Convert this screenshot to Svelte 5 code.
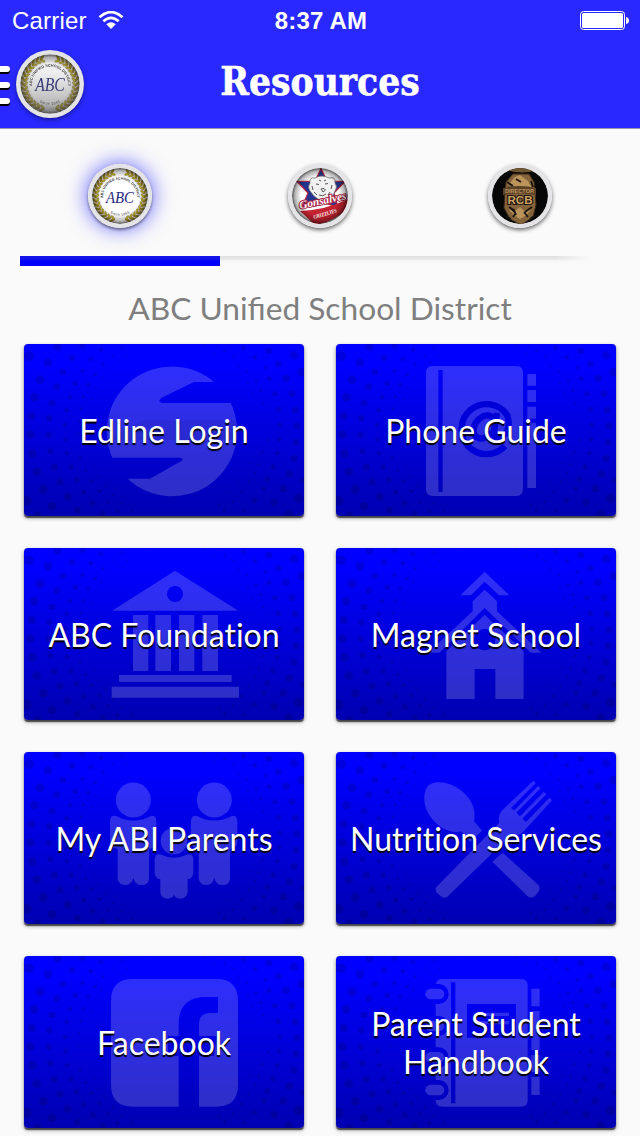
<script lang="ts">
	type Kind = 'abc' | 'bear' | 'badge';

	const schools: { kind: Kind; name: string }[] = [
		{ kind: 'abc', name: 'ABC Unified School District' },
		{ kind: 'bear', name: 'Gonsalves' },
		{ kind: 'badge', name: 'RCB' }
	];

	const links = [
		{ icon: 'edline', label: 'Edline Login' },
		{ icon: 'phone', label: 'Phone Guide' },
		{ icon: 'bank', label: 'ABC Foundation' },
		{ icon: 'school', label: 'Magnet School' },
		{ icon: 'family', label: 'My ABI Parents' },
		{ icon: 'food', label: 'Nutrition Services' },
		{ icon: 'facebook', label: 'Facebook' },
		{ icon: 'handbook', label: 'Parent Student Handbook' }
	];

	let active = $state(0);

	// x, y, radius on the 840x516 card grid
	const dots = [
		[15, 37, 15], [48, 107, 13], [31, 160, 13], [23, 216, 12], [19, 272, 13], [25, 328, 13], [38, 383, 13], [58, 436, 13], [84, 486, 13], [8, 470, 15], [40, 516, 12],
		[100, 9, 12], [72, 55, 13], [117, 84, 10], [98, 128, 10], [84, 177, 10], [76, 223, 9], [74, 272, 9], [79, 322, 9], [91, 370, 10], [108, 414, 10], [131, 459, 11], [160, 498, 10],
		[175, 6, 9], [144, 42, 10], [175, 82, 6], [154, 118, 8], [138, 159, 7], [128, 199, 7], [123, 243, 7], [125, 286, 7], [129, 328, 7], [141, 369, 8], [158, 407, 8], [179, 444, 8], [206, 477, 8], [236, 508, 8],
		[231, 17, 7], [200, 46, 7], [214, 91, 5], [193, 122, 6], [178, 158, 5], [171, 195, 5], [165, 233, 4], [163, 270, 4], [168, 343, 5], [185, 379, 5], [203, 412, 6], [226, 442, 6], [252, 474, 6], [280, 502, 6],
		[295, 13, 5], [265, 36, 4], [237, 62, 5], [233, 103, 3], [216, 131, 3], [203, 165, 3], [208, 368, 3], [224, 398, 3], [245, 427, 4], [268, 453, 4], [294, 478, 4], [325, 500, 4],
		[338, 20, 2], [308, 38, 3], [283, 53, 3], [256, 73, 2], [372, 5, 2],
		[810, 33, 13], [833, 84, 13], [786, 103, 11], [804, 149, 10], [814, 198, 10], [818, 246, 10], [816, 294, 10], [810, 343, 10], [796, 390, 11], [778, 435, 11], [750, 475, 11], [823, 463, 14], [794, 511, 13], [836, 410, 8],
		[734, 21, 10], [763, 60, 10], [735, 104, 7], [753, 149, 8], [763, 196, 8], [767, 243, 7], [765, 286, 7], [760, 328, 7], [747, 368, 8], [730, 405, 8], [720, 435, 7], [691, 469, 8], [661, 500, 6],
		[658, 11, 7], [693, 40, 7], [725, 71, 6], [697, 111, 5], [710, 140, 5], [717, 178, 4], [734, 288, 4], [717, 325, 4], [704, 361, 4], [692, 387, 4], [675, 413, 4], [653, 443, 5], [628, 473, 5], [602, 498, 5],
		[602, 22, 4], [631, 40, 4], [642, 65, 4], [668, 82, 4], [671, 117, 3], [687, 151, 3], [706, 331, 3], [680, 357, 3], [640, 415, 3], [615, 445, 3], [585, 482, 4], [580, 7, 3], [571, 25, 3], [538, 3, 3]
	];

	// laurel leaves, mirrored on both sides of the seal
	const leaves = Array.from({ length: 15 }, (_, i) => {
		const deg = 108 + i * 10.3;
		const a = (deg * Math.PI) / 180;
		return { x: Math.cos(a), y: Math.sin(a), deg };
	});
</script>

{#snippet emblem(kind: Kind, dim: boolean)}
	<svg class="emblem" viewBox="0 0 64 64">
		<defs>
			<radialGradient id="inner-{kind}-{dim}">
				<stop offset="0.68" stop-color="#000" stop-opacity="0" />
				<stop offset="0.9" stop-color="#000" stop-opacity="0.3" />
				<stop offset="1" stop-color="#000" stop-opacity="0.7" />
			</radialGradient>
			<linearGradient id="shade" x1="0" y1="0" x2="0" y2="1">
				<stop offset="0.3" stop-color="#777" stop-opacity="0.12" />
				<stop offset="1" stop-color="#555" stop-opacity="0.55" />
			</linearGradient>
			<clipPath id="disc"><circle cx="32" cy="32" r="28" /></clipPath>
			<path id="arc-top" d="M17.500 41.500A17 17 0 1 1 46.500 41.500" />
			<path id="arc-bottom" d="M18 46A20 20 0 0 0 46 46" />
		</defs>
		<circle cx="32" cy="32" r="32" fill="#e4e4e6" />
		<g clip-path="url(#disc)">
			<circle cx="32" cy="32" r="28" fill={kind === 'badge' ? '#070707' : '#fff'} />
			{#if kind === 'abc'}
				{#each leaves as leaf}
					{#each [1, -1] as side}
						<g transform="translate(32 32) scale({side} 1)">
							<ellipse cx={leaf.x * 25.5} cy={leaf.y * 25.5} rx="3" ry="1.300" fill="#b59a24" transform="rotate({leaf.deg + 50} {leaf.x * 25.5} {leaf.y * 25.5})" />
							<ellipse cx={leaf.x * 22.8} cy={leaf.y * 22.8} rx="2.500" ry="1" fill="#d8c02c" stroke="#685d2d" stroke-width=".35" transform="rotate({leaf.deg + 125} {leaf.x * 22.8} {leaf.y * 22.8})" />
						</g>
					{/each}
				{/each}
				<text class="ring"><textPath href="#arc-top" startOffset="50%" text-anchor="middle">ABC UNIFIED SCHOOL DISTRICT</textPath></text>
				<text class="ring since"><textPath href="#arc-bottom" startOffset="50%" text-anchor="middle">Since 1965</textPath></text>
				<text class="abc" x="32" y="38.500" text-anchor="middle" textLength="28" lengthAdjust="spacingAndGlyphs">ABC</text>
			{:else if kind === 'bear'}
				<path d="M33 4.500L39 17L57 17.500L46 29L50 43L33 38L14 43L20 29L9 17.500L27 17Z" fill="#23368f" stroke="#b82242" stroke-width="1.200" />
				<path d="M22 19q-1-6 5-5q7-4 14 0q7-2 6 5q3 4 0 8l-2 5-5 1-4 4-6-2-4-3-4-5q-3-4 0-8Z" fill="#f1f1f1" stroke="#666" stroke-width=".7" />
				<path d="M28 20l3 .5M37 20l3-.5M33 25l3-.5 1.500 1.500-2.500 2ZM31 31q4 2 7-1M24 22l1 4M44 21l-1 4M26 28l3 3M42 28l-2 3M31 16l2 1M38 16l-2 1" fill="none" stroke="#444" stroke-width=".9" />
				<path d="M12 47Q38 46 60 35L58 46Q45 58 27 61Z" fill="#c52331" />
				<text class="gonzo" x="12" y="45" transform="rotate(-12 12 45)" textLength="48" lengthAdjust="spacingAndGlyphs">Gonsalves</text>
				<text class="grizz" x="26" y="55" transform="rotate(-16 26 55)" textLength="24" lengthAdjust="spacingAndGlyphs">GRIZZLIES</text>
			{:else}
				<path d="M18 6q6-1 9-1l1-5h9l2 5q6 0 10 1-15 5-31 0Z" fill="#6e5431" />
				<path d="M25 10h16l5 8 1 9 1 14-3 12-12 8-11-6-6-11 1-16 1-10Z" fill="#84633a" stroke="#3c2b1b" />
				<path d="M27 13l5-2 8 6 4 7-17-1-6-3ZM21 46l5 5 6 4 7-4 4-6-7 2-4-4-5 4Z" fill="#bb945c" />
				<path d="M19 18l6 4M43 17l2 6M21 43l5 3 2 5M44 43l-7 5M25 53l3-4M40 53l-4-5M28 15l5 3M18 52l5 3M46 52l-4 3" stroke="#1b1511" stroke-width="1.800" />
				<path d="M15 24q17-4 33 0v7q-16-3-33 0Z" fill="#594126" />
				<text class="rank" x="31.500" y="29" text-anchor="middle" textLength="29" lengthAdjust="spacingAndGlyphs">DIRECTOR</text>
				<text class="rcb" x="32" y="40" text-anchor="middle" textLength="25" lengthAdjust="spacingAndGlyphs">RCB</text>
			{/if}
			{#if kind !== 'badge'}
				<circle cx="32" cy="32" r="28" fill="url(#inner-{kind}-{dim})" />
			{/if}
			{#if dim}
				<circle cx="32" cy="32" r="28" fill="url(#shade)" />
			{/if}
		</g>
	</svg>
{/snippet}

{#snippet glyph(icon: string)}
	{#if icon === 'edline'}
		<path d="M570 114A195 195 0 0 0 265 341H468Q480 342 473 350L378 404H311A195 195 0 0 0 620 177H413Q399 171 413 161L510 114Z" />
		<path class="band" d="M250 288L358 229H636L638 288Z" />
	{:else if icon === 'phone'}
		<path fill-rule="evenodd" d="M290 66H541Q561 66 561 86V436Q561 456 541 456H290Q270 456 270 436V86Q270 66 290 66ZM307 78V444H320V78Z" />
		<path d="M574 90h26v35h-26ZM574 138h26v36h-26ZM574 188h26v36h-26ZM574 236h26v196h-26Z" />
		<path class="cut" d="M507 306A75 75 0 1 1 514 214Q527 256 499 278Q473 288 474 263L483 207M477 234Q468 208 443 216Q407 235 414 269Q431 300 469 265" />
	{:else if icon === 'bank'}
		<path fill-rule="evenodd" d="M453 68L643 188H264ZM453 114a24 24 0 1 0 .1 0Z" />
		<path d="M327 201h46v168h-46ZM394 201h47v168h-47ZM465 201h46v168h-46ZM535 201h47v168h-47ZM285 381h338v21H285ZM263 416h382v33H263Z" />
	{:else if icon === 'school'}
		<path d="M446 71L520 142H489L446 101L405 142H373ZM446 125L483 160V190L616 314H585L446 180L310 314H276L410 190V160Z" />
		<path fill-rule="evenodd" d="M446 200L563 310V453H478V363H416V453H331V310ZM446 243a32 32 0 1 0 .1 0Z" />
	{:else if icon === 'family'}
		{#each [0, 243] as dx}
			<g transform="translate({dx} 0)">
				<circle cx="328" cy="144" r="52.500" />
				<path d="M258 208Q259 189 276 192Q328 219 381 192Q396 189 397 208V270Q397 289 375 290V380Q373 399 354 399Q332 399 328 377Q323 399 302 399Q284 398 281 380V290Q258 288 258 270Z" />
			</g>
		{/each}
		<circle cx="450" cy="267" r="40" />
		<path d="M392 320Q395 303 412 308Q450 326 488 308Q506 303 508 320V362Q506 380 491 382V420Q488 440 468 440Q453 440 450 427Q447 440 430 440Q410 438 409 420V382Q393 380 392 362Z" />
	{:else if icon === 'food'}
		<path d="M272 107C289 78 354 89 390 129C413 154 420 184 414 207L438 236L402 270L376 238C348 246 312 231 286 198C263 168 259 132 272 107Z" />
		<path d="M500 302L605 397Q614 406 609 416L597 433Q585 441 574 432L469 329Z" />
		<path d="M592 86L497 176Q485 189 490 212L299 407Q297 414 302 422L319 436Q327 439 334 434L525 249Q552 252 562 239L648 145L640 137L570 210L559 200L631 127L623 120L552 193L541 182L614 109L606 102L535 175L525 168L599 94Z" />
	{:else if icon === 'facebook'}
		<path fill-rule="evenodd" d="M326 69H577Q642 69 642 134V387Q642 452 577 452H525V300H570L578 240H525V205Q525 171 560 171H582V123H545Q464 123 464 205V240H432V300H464V452H326Q261 452 261 387V134Q261 69 326 69Z" />
	{:else}
		<path fill-rule="evenodd" d="M319 69H555Q575 69 575 89V432Q575 452 555 452H319Q299 452 299 432H308A30 30 0 0 0 308 372H299V334H308A30 30 0 0 0 308 274H299V240H308A30 30 0 0 0 308 180H299V144H308A30 30 0 0 0 308 84H299Q303 69 319 69ZM345 79V442H358V79ZM393 144V245H540V144Z" />
		{#each [114, 210, 304, 402] as y}
			<rect x="268" y={y - 16} width="57" height="32" rx="16" />
		{/each}
		<path d="M415 170h104v10H415ZM415 195h104v10H415ZM586 98h25v53h-25ZM586 165h25v117h-25ZM586 297h25v52h-25ZM586 363h25v54h-25Z" />
	{/if}
{/snippet}

<div class="app">
	<header>
		<div class="status">
			<span class="carrier">
				Carrier
				<svg width="26" height="19" viewBox="0 0 26 19">
					<path d="M1.500 6.300Q13-4 24.500 6.300M5.300 10.300Q13 3.500 20.700 10.300" fill="none" stroke="#fff" stroke-width="2.800" />
					<path d="M8.300 13.200Q13 9.500 17.700 13.200L13 18Z" fill="#fff" />
				</svg>
			</span>
			<strong>8:37 AM</strong>
			<svg class="battery" width="50" height="20" viewBox="0 0 50 20">
				<rect x=".5" y=".5" width="44" height="18" rx="3" fill="none" stroke="#fff" />
				<rect x="2" y="2" width="41" height="15" rx="1.500" fill="#fff" />
				<path d="M46 6q3 .5 3 3.500t-3 3.500Z" fill="#fff" />
			</svg>
		</div>
		<div class="nav">
			<button class="menu" aria-label="Menu">
				<span class="bars"><i></i><i></i><i></i></span>
				{@render emblem('abc', true)}
			</button>
			<h1>Resources</h1>
		</div>
	</header>

	<nav class="tabs">
		{#each schools as school, i}
			<button class:active={active === i} aria-label={school.name} onclick={() => (active = i)}>
				{@render emblem(school.kind, false)}
			</button>
		{/each}
	</nav>
	<div class="track"><div class="thumb" style="margin-left: {active * 200}px;"></div></div>

	<h2>ABC Unified School District</h2>

	<main>
		{#each links as link}
			<button class="card">
				<svg viewBox="0 0 840 516" aria-hidden="true">
					<g class="dots">
						{#each dots as [x, y, r]}
							<circle cx={x} cy={y} {r} />
						{/each}
					</g>
					<g class="glyph">{@render glyph(link.icon)}</g>
				</svg>
				<span>{link.label}</span>
			</button>
		{/each}
	</main>
</div>

<style>
	:global(body) {
		background: #fafafa;
		overflow: hidden;
	}

	.app {
		width: 640px;
		height: 1136px;
		overflow: hidden;
		font-family: Lato, sans-serif;
	}

	button {
		border: 0;
		padding: 0;
		background: none;
		font: inherit;
	}

	header {
		height: 129px;
		box-sizing: border-box;
		background: #2828ff;
		border-bottom: 1px solid #9a9aa6;
		color: #fff;
	}

	.status {
		display: grid;
		grid-template-columns: 1fr auto 1fr;
		align-items: center;
		height: 40px;
		box-sizing: border-box;
		padding: 1px 10px 0 12px;
		font: 24px 'Liberation Sans', sans-serif;
	}

	.status strong {
		letter-spacing: 0.2px;
	}

	.carrier {
		display: flex;
		align-items: center;
		gap: 11px;
		letter-spacing: 0.2px;
	}

	.battery {
		justify-self: end;
	}

	.nav {
		display: grid;
		grid-template-columns: 84px 1fr 84px;
		align-items: center;
		height: 88px;
	}

	.menu {
		display: flex;
		align-items: center;
		gap: 6px;
	}

	.menu .emblem {
		width: 68px;
		height: 68px;
		filter: drop-shadow(0 2px 2px rgba(0, 0, 0, 0.4));
	}

	.bars {
		display: grid;
		gap: 10px;
		padding-top: 2px;
	}

	.bars i {
		width: 10px;
		height: 6px;
		border-radius: 0 3px 3px 0;
		background: #fff;
		box-shadow: 0 2px #000;
	}

	h1 {
		margin: 0;
		padding-bottom: 5px;
		text-align: center;
		font: bold 38.5px 'DejaVu Serif', serif;
		font-stretch: condensed;
		-webkit-text-stroke: 0.5px #fff;
	}

	.emblem {
		display: block;
		flex: none;
	}

	.tabs {
		display: grid;
		grid-template-columns: repeat(3, 1fr);
		justify-items: center;
		padding: 35px 20px 28px;
	}

	.tabs button {
		width: 64px;
		height: 64px;
		border-radius: 50%;
		box-shadow: 0 2px 4px rgba(0, 0, 0, 0.6);
	}

	.tabs .active {
		box-shadow:
			0 2px 3px rgba(0, 0, 0, 0.45),
			0 0 22px rgba(0, 0, 255, 0.65);
	}

	.ring {
		font: bold 3.5px 'Liberation Sans', sans-serif;
		fill: #333;
	}

	.since {
		font-weight: normal;
		letter-spacing: 0.3px;
	}

	.abc {
		font: italic 17px 'Liberation Serif', serif;
		fill: #292b7d;
	}

	.gonzo {
		font: italic bold 11px 'Liberation Serif', serif;
		fill: #fff;
		stroke: #a3203f;
		stroke-width: 2px;
		paint-order: stroke;
	}

	.grizz {
		font: bold 5.5px 'Liberation Serif', serif;
		fill: #fff;
	}

	.rank {
		font: bold 5px 'Liberation Sans', sans-serif;
		fill: #bd965f;
	}

	.rcb {
		font: bold 10px 'Liberation Sans', sans-serif;
		fill: #d0a466;
		stroke: #1a120b;
		stroke-width: 2px;
		paint-order: stroke;
	}

	.track {
		height: 10px;
		margin: 0 50px 0 20px;
		background: linear-gradient(#e1e1e1, #e5e5e5 3px, #f7f7f7 5px, #fafafa);
		mask-image: linear-gradient(90deg, #000 94%, transparent);
	}

	.thumb {
		width: 200px;
		height: 10px;
		background: linear-gradient(#1515e6, #1111ea 3px, #0000fa 5px, #0000fa);
	}

	h2 {
		margin: 0;
		height: 78px;
		line-height: 84px;
		text-align: center;
		font-size: 31.7px;
		font-weight: 400;
		color: #7f7f7f;
	}

	main {
		display: grid;
		grid-template-columns: 280px 280px;
		grid-auto-rows: 172px;
		gap: 32px;
		padding: 0 24px;
	}

	.card {
		display: grid;
		place-items: center;
		border-radius: 4px;
		background: linear-gradient(#00f 10%, #0000b2);
		box-shadow:
			0 2px 1px rgba(0, 0, 0, 0.6),
			0 2px 4px rgba(0, 0, 0, 0.4);
		overflow: hidden;
		color: #fff;
		font-size: 32px;
		line-height: 38px;
		font-variant-ligatures: none;
		text-shadow: 0 2px 1px #000;
	}

	.card > * {
		grid-area: 1 / 1;
	}

	.card svg {
		width: 280px;
		height: 172px;
	}

	.card span {
		max-width: 260px;
		padding-top: 1px;
		z-index: 1;
	}

	.dots {
		fill: rgba(0, 0, 0, 0.13);
	}

	.glyph {
		fill: rgba(255, 255, 255, 0.18);
	}

	.band {
		fill: rgba(0, 0, 60, 0.08);
	}

	.cut {
		fill: none;
		stroke: #0000d8;
		stroke-width: 19;
	}
</style>
